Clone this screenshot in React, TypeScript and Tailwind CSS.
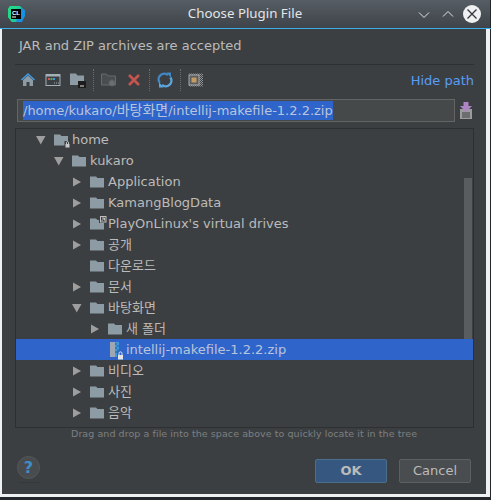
import React from 'react';

const bodyFont = 'font-["DejaVu_Sans","Noto_Sans_CJK_KR",sans-serif]';

function FolderIcon({ badge }: { badge?: 'lock' | 'link' }) {
  return (
    <svg width="18" height="16" viewBox="0 0 18 16" className="shrink-0">
      <path d="M0 2.5h6L7.5 4H14v9.5H0z" fill="#8d9ba4" />
      {badge === 'lock' && (
        <g>
          <rect x="10.5" y="9" width="6" height="7" fill="#3c3f41" />
          <rect x="11.5" y="12" width="4" height="3.5" fill="#c8c8c8" />
          <path d="M12.5 12v-1.4a1 1 0 0 1 2 0V12" fill="none" stroke="#c8c8c8" />
        </g>
      )}
      {badge === 'link' && (
        <g>
          <rect x="9" y="0" width="7" height="7" fill="#3c3f41" />
          <rect x="10.5" y="0.5" width="5.5" height="5.5" fill="none" stroke="#c0c0c0" />
          <path d="M11.5 5l3-3M12 2h2.5v2.5" fill="none" stroke="#c0c0c0" />
        </g>
      )}
    </svg>
  );
}

function ZipIcon() {
  return (
    <svg width="18" height="20" viewBox="0 0 18 20" className="shrink-0">
      <rect x="2" y="2" width="6" height="15" fill="#9fa8b2" />
      <rect x="7" y="2" width="4" height="15" fill="#3d9ae0" />
      <path d="M7 4h2M9 6h2M7 8h2M9 10h2M7 12h2M9 14h2" stroke="#1e5f99" />
      <rect x="9" y="11" width="7" height="9" fill="#2f65ca" />
      <rect x="10" y="15" width="5" height="4.5" fill="#e4e4e4" />
      <path d="M11 15v-1.6a1.5 1.5 0 0 1 3 0V15" fill="none" stroke="#e4e4e4" />
    </svg>
  );
}

function Arrow({ open }: { open?: boolean }) {
  return (
    <svg width="18" height="12" viewBox="0 0 18 12" className="shrink-0">
      {open ? <path d="M0 2h9.5L4.75 10.5z" fill="#9e9e9e" /> : <path d="M1 1.5L9 6l-8 4.5z" fill="#9e9e9e" />}
    </svg>
  );
}

type Row = {
  label: string;
  depth: number;
  state?: 'open' | 'closed';
  badge?: 'lock' | 'link';
  selected?: boolean;
  zip?: boolean;
};

const rows: Row[] = [
  { label: 'home', depth: 0, state: 'open', badge: 'lock' },
  { label: 'kukaro', depth: 1, state: 'open' },
  { label: 'Application', depth: 2, state: 'closed' },
  { label: 'KamangBlogData', depth: 2, state: 'closed' },
  { label: "PlayOnLinux's virtual drives", depth: 2, state: 'closed', badge: 'link' },
  { label: '공개', depth: 2, state: 'closed' },
  { label: '다운로드', depth: 2 },
  { label: '문서', depth: 2, state: 'closed' },
  { label: '바탕화면', depth: 2, state: 'open' },
  { label: '새 폴더', depth: 3, state: 'closed' },
  { label: 'intellij-makefile-1.2.2.zip', depth: 3, zip: true, selected: true },
  { label: '비디오', depth: 2, state: 'closed' },
  { label: '사진', depth: 2, state: 'closed' },
  { label: '음악', depth: 2, state: 'closed' },
];

const indents = ['pl-[20px]', 'pl-[38px]', 'pl-[56px]', 'pl-[74px]'];

function TreeRow({ row }: { row: Row }) {
  return (
    <div
      className={`flex h-[21px] items-center ${indents[row.depth]} ${row.selected ? 'relative z-10 bg-[#2f65ca] text-[#b9c4dc]' : 'text-[#bbbbbb]'}`}
    >
      <div className="w-[18px] shrink-0">{row.state && <Arrow open={row.state === 'open'} />}</div>
      {row.zip ? <ZipIcon /> : <FolderIcon badge={row.badge} />}
      <span className="whitespace-pre text-[13px] leading-[21px]">{row.label}</span>
    </div>
  );
}

function ToolSep() {
  return <div className="mx-[7px] h-[22px] w-0 border-l border-dotted border-[#6a6d6f]" />;
}

function Toolbar() {
  return (
    <div className="flex h-[34px] items-center pb-[4px] pl-[20px]">
      <svg width="16" height="16" viewBox="0 0 16 16">
        <path d="M3 8v6h3.5v-4h3v4H13V8L8 3.5z" fill="#8d9ba4" />
        <path d="M1.5 8L8 2l6.5 6" fill="none" stroke="#3d9ae0" strokeWidth="1.6" />
      </svg>
      <svg width="16" height="16" viewBox="0 0 16 16" className="ml-[9px]">
        <rect x="1" y="2.5" width="14" height="11" fill="#3c3f41" stroke="#a3b0b8" />
        <rect x="1" y="2.5" width="14" height="2" fill="#a3b0b8" />
        <rect x="3" y="6" width="2" height="2" fill="#d9534f" />
        <rect x="5.5" y="6" width="2" height="2" fill="#59a869" />
        <rect x="8" y="6" width="2" height="2" fill="#3d9ae0" />
        <path d="M9 11h1M11 11h1M13 11h1" stroke="#a3b0b8" />
      </svg>
      <svg width="16" height="16" viewBox="0 0 16 16" className="ml-[9px]">
        <path d="M0 1.5h6L7.5 3.5H14V13H0z" fill="#8d9ba4" />
        <rect x="8" y="9" width="8" height="7" fill="#1c1c1c" />
        <rect x="10" y="13.5" width="4" height="1" fill="#e0e0e0" />
      </svg>
      <ToolSep />
      <svg width="16" height="16" viewBox="0 0 16 16">
        <path d="M0.5 2h5L7 4h7.5v9H0.5z" fill="#4a4d4f" stroke="#666a6c" />
        <path d="M11 7l1 2 2-1-1 2 2 1-2 1 1 2-2-1-1 2-1-2-2 1 1-2-2-1 2-1-1-2 2 1z" fill="#6c6f71" />
      </svg>
      <svg width="16" height="16" viewBox="0 0 16 16" className="ml-[9px]">
        <path d="M3 3l10 10M13 3L3 13" stroke="#c75450" strokeWidth="2.6" />
      </svg>
      <ToolSep />
      <svg width="16" height="16" viewBox="0 0 16 16">
        <path d="M11 3.2A5.6 5.6 0 0 0 2.6 10.5" fill="none" stroke="#4088c4" strokeWidth="2.4" />
        <path d="M5 12.8A5.6 5.6 0 0 0 13.4 5.5" fill="none" stroke="#5ba6de" strokeWidth="2.4" />
        <path d="M9.5 0.5h4.5V6z" fill="#4088c4" />
        <path d="M6.5 15.5H2V10z" fill="#5ba6de" />
      </svg>
      <ToolSep />
      <svg width="16" height="16" viewBox="0 0 16 16">
        <defs>
          <pattern id="checker" width="2" height="2" patternUnits="userSpaceOnUse">
            <rect width="2" height="2" fill="#3c3f41" />
            <rect width="1" height="1" fill="#8f9193" />
            <rect x="1" y="1" width="1" height="1" fill="#8f9193" />
          </pattern>
        </defs>
        <rect x="1" y="1.5" width="14" height="13" fill="url(#checker)" />
        <rect x="1" y="3" width="10" height="10" fill="#5b5e60" stroke="#a8a8a8" />
        <rect x="3.5" y="5.5" width="5" height="5" fill="#c69b62" />
      </svg>
    </div>
  );
}

export default function App() {
  return (
    <div className={`h-[500px] w-[491px] overflow-hidden bg-[#23262b] ${bodyFont}`}>
      <div className="flex h-[497px] w-[490px] flex-col bg-[#eff0f1]">
        <div className="relative flex h-[28px] shrink-0 items-center justify-center bg-gradient-to-b from-[#565d64] to-[#3e4449] font-['Noto_Sans',sans-serif] text-[13.3px] text-[#e3e5e7]">
          <span>Choose Plugin File</span>
          <svg width="18" height="18" viewBox="0 0 18 18" className="absolute left-[7px] top-[5px]">
            <path d="M3 1h10l4 4v6l-3 6H5L1 12V4z" fill="#1fc8a0" />
            <path d="M1 4l2-3h8L5 17 1 12z" fill="#21d789" />
            <path d="M9 17h6l3-6V5l-4-2z" fill="#1a8fe0" />
            <rect x="4" y="4" width="10" height="10" fill="#000000" />
            <text x="5" y="10" fontSize="6" fontWeight="700" fill="#ffffff" fontFamily="Liberation Sans">CL</text>
            <rect x="5" y="11.5" width="4" height="1" fill="#ffffff" />
          </svg>
          <svg width="12" height="8" viewBox="0 0 12 8" className="absolute left-[418px] top-[11px]">
            <path d="M1 1.5l5 5 5-5" fill="none" stroke="#e3e5e7" />
          </svg>
          <svg width="12" height="8" viewBox="0 0 12 8" className="absolute left-[442px] top-[10px]">
            <path d="M1 6.5l5-5 5 5" fill="none" stroke="#e3e5e7" />
          </svg>
          <svg width="18" height="18" viewBox="0 0 18 18" className="absolute left-[463px] top-[5px]">
            <circle cx="9" cy="9" r="9" fill="#eff0f1" />
            <path d="M4.5 4.5l9 9M13.5 4.5l-9 9" stroke="#31363b" strokeWidth="1.3" />
          </svg>
        </div>
        <div className="h-px w-[491px] shrink-0 bg-[#3daee9]" />

        <div className="ml-[2px] mr-[4px] flex h-[465px] flex-col bg-[#3c3f41] pl-[13px] pr-[12px]">
          <div className="flex h-[35px] shrink-0 items-center pb-[2px] pl-[4px] text-[13px] text-[#bbbbbb]">
            JAR and ZIP archives are accepted
          </div>
          <div className="h-px shrink-0 bg-[#2d2f31]" />
          <div className="relative -ml-[15px]">
            <Toolbar />
            <a className="absolute right-0 top-[6px] text-[13px] text-[#589df6]">Hide path</a>
          </div>
          <div className="flex shrink-0 items-center">
            <div className="ml-[2px] flex h-[23px] w-[438px] items-center border border-[#646464] bg-[#45494a] pl-[5px] text-[13px] text-[#bbbbbb]">
              <span className="h-[19px] whitespace-pre bg-[#2f65ca] leading-[19px] text-[#b9c4dc]">
                /home/kukaro/<span className="text-[14px]">바탕화면</span>/intellij-makefile-1.2.2.zip
              </span>
            </div>
            <svg width="12" height="17" viewBox="0 0 12 17" className="ml-[5px]">
              <rect x="0" y="7" width="12" height="10" fill="#9a9c9e" />
              <path d="M2 11h8M2 13h8M2 15h8" stroke="#3c3f41" />
              <path d="M3.5 0h5v4H12L6 10 0 4h3.5z" fill="#ad85c5" />
            </svg>
          </div>
          <div className="relative mt-[6px] h-[300px] shrink-0 overflow-hidden border border-[#2d2f31]">
            {rows.map((row) => (
              <TreeRow key={row.label} row={row} />
            ))}
            <div className="absolute right-[1px] top-[49px] h-[162px] w-[8px] bg-[#5a5d5f]" />
          </div>
          <div className="h-[13px] shrink-0 pl-[56px] text-[9.5px] leading-[12px] tracking-[0.07px] text-[#7d7f81]">
            Drag and drop a file into the space above to quickly locate it in the tree
          </div>
          <div className="relative -ml-[13px] flex flex-1 items-start justify-end pt-[18px]">
            <div className="absolute left-[15px] top-[15px] flex h-[23px] w-[23px] items-center justify-center rounded-full border border-[#54585a] bg-[#484c4f] text-[16px] font-bold text-[#3d8fc7]">
              ?
            </div>
            <div className="absolute left-[17px] top-[41px] h-px w-[21px] bg-[#353739]" />
            <button className="h-[24px] w-[72px] rounded-[2px] border border-[#4c708c] bg-[#365880] text-[13px] font-bold text-[#bbbbbb]">
              OK
            </button>
            <button className="ml-[12px] mr-[3px] h-[24px] w-[72px] rounded-[2px] border border-[#5e6060] bg-[#4a4d4f] text-[13px] text-[#bbbbbb]">
              Cancel
            </button>
          </div>
        </div>
      </div>
    </div>
  );
}
